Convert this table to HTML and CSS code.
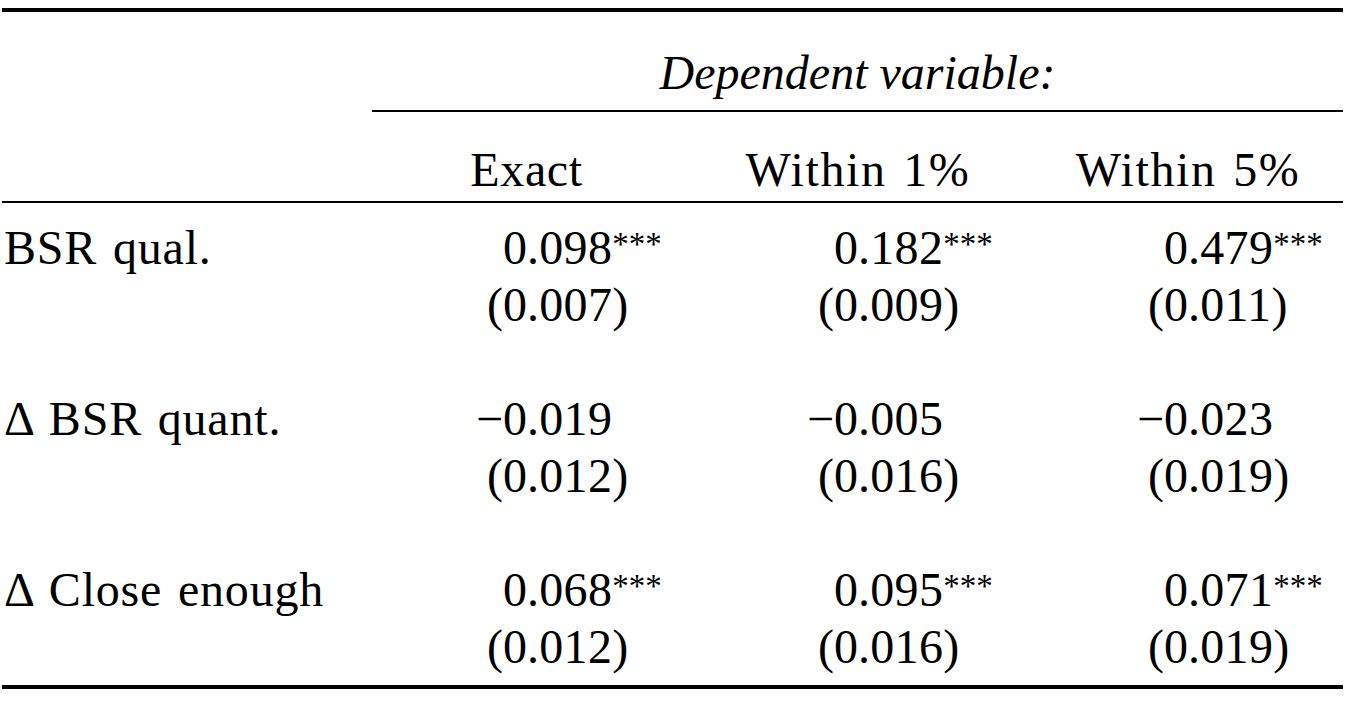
FILE: index.html
```html
<!DOCTYPE html>
<html lang="en">
<head>
<meta charset="utf-8">
<title>Regression table</title>
<link rel="stylesheet" href="styles.css">
</head>
<body>
<table class="reg">
  <colgroup>
    <col class="c-label">
    <col class="c-int1"><col class="c-frac1">
    <col class="c-int2"><col class="c-frac2">
    <col class="c-int3"><col class="c-frac3">
  </colgroup>
  <thead>
    <tr class="dep-row">
      <th></th>
      <th colspan="6" class="dep-cell"><div class="dep">Dependent variable:</div></th>
    </tr>
    <tr class="head-row">
      <th></th>
      <th colspan="2" class="hd">Exact</th>
      <th colspan="2" class="hd hd-wide">Within 1%</th>
      <th colspan="2" class="hd hd-wide hd-last">Within 5%</th>
    </tr>
  </thead>
  <tbody>
    <tr class="first">
      <td class="lab">BSR qual.</td>
      <td class="int">0</td><td class="frac">.098<sup class="st">***</sup></td>
      <td class="int">0</td><td class="frac">.182<sup class="st">***</sup></td>
      <td class="int">0</td><td class="frac">.479<sup class="st">***</sup></td>
    </tr>
    <tr>
      <td class="lab"></td>
      <td class="int">(0</td><td class="frac">.007)</td>
      <td class="int">(0</td><td class="frac">.009)</td>
      <td class="int">(0</td><td class="frac">.011)</td>
    </tr>
    <tr class="blank"><td colspan="7"></td></tr>
    <tr>
      <td class="lab">Δ BSR quant.</td>
      <td class="int">−0</td><td class="frac">.019</td>
      <td class="int">−0</td><td class="frac">.005</td>
      <td class="int">−0</td><td class="frac">.023</td>
    </tr>
    <tr>
      <td class="lab"></td>
      <td class="int">(0</td><td class="frac">.012)</td>
      <td class="int">(0</td><td class="frac">.016)</td>
      <td class="int">(0</td><td class="frac">.019)</td>
    </tr>
    <tr class="blank"><td colspan="7"></td></tr>
    <tr>
      <td class="lab">Δ Close enough</td>
      <td class="int">0</td><td class="frac">.068<sup class="st">***</sup></td>
      <td class="int">0</td><td class="frac">.095<sup class="st">***</sup></td>
      <td class="int">0</td><td class="frac">.071<sup class="st">***</sup></td>
    </tr>
    <tr class="last">
      <td class="lab"></td>
      <td class="int">(0</td><td class="frac">.012)</td>
      <td class="int">(0</td><td class="frac">.016)</td>
      <td class="int">(0</td><td class="frac">.019)</td>
    </tr>
  </tbody>
</table>
</body>
</html>
```
FILE: styles.css
```css
html, body {
  margin: 0;
  padding: 0;
  background: #ffffff;
}

body {
  overflow: hidden;
}

.reg {
  font-family: "Liberation Serif", "Times New Roman", serif;
  font-size: 48px;
  color: #000000;
  table-layout: fixed;
  width: 1341px;
  margin: 8px 0 0 2px;
  border-collapse: separate;
  border-spacing: 0;
  border-top: 4px solid #000000;
  border-bottom: 4px solid #000000;
}

.c-label { width: 358px; }
.c-int1 { width: 167px; }
.c-frac1 { width: 166px; }
.c-int2 { width: 165px; }
.c-frac2 { width: 165px; }
.c-int3 { width: 165px; }
.c-frac3 { width: 155px; }

.reg th,
.reg td {
  padding: 0;
  font-weight: normal;
  white-space: nowrap;
  line-height: 57px;
}

.dep-row th {
  padding-top: 37px;
  line-height: 48px;
}

.dep-cell {
  text-align: left;
}

.dep {
  margin-left: 12px;
  padding-bottom: 13px;
  border-bottom: 2px solid #000000;
  text-align: center;
  font-style: italic;
}

.head-row th {
  padding-top: 34px;
  padding-bottom: 7px;
  line-height: 48px;
  border-bottom: 2px solid #000000;
  text-align: center;
}

.head-row .hd {
  letter-spacing: 0.6px;
}

.head-row .hd-wide {
  letter-spacing: 1.6px;
  word-spacing: 3px;
}

.head-row .hd-last {
  padding-left: 10px;
}

.first td {
  padding-top: 16px;
}

.last td {
  padding-bottom: 10px;
}

.blank td {
  height: 57px;
}

.lab {
  text-align: left;
  padding-left: 2px !important;
  letter-spacing: 0.8px;
  word-spacing: 3px;
}

.int {
  text-align: right;
}

.frac {
  text-align: left;
  letter-spacing: 0.3px;
}

.st {
  font-size: 33px;
  line-height: 0;
  vertical-align: 9px;
  letter-spacing: 0;
}
```
